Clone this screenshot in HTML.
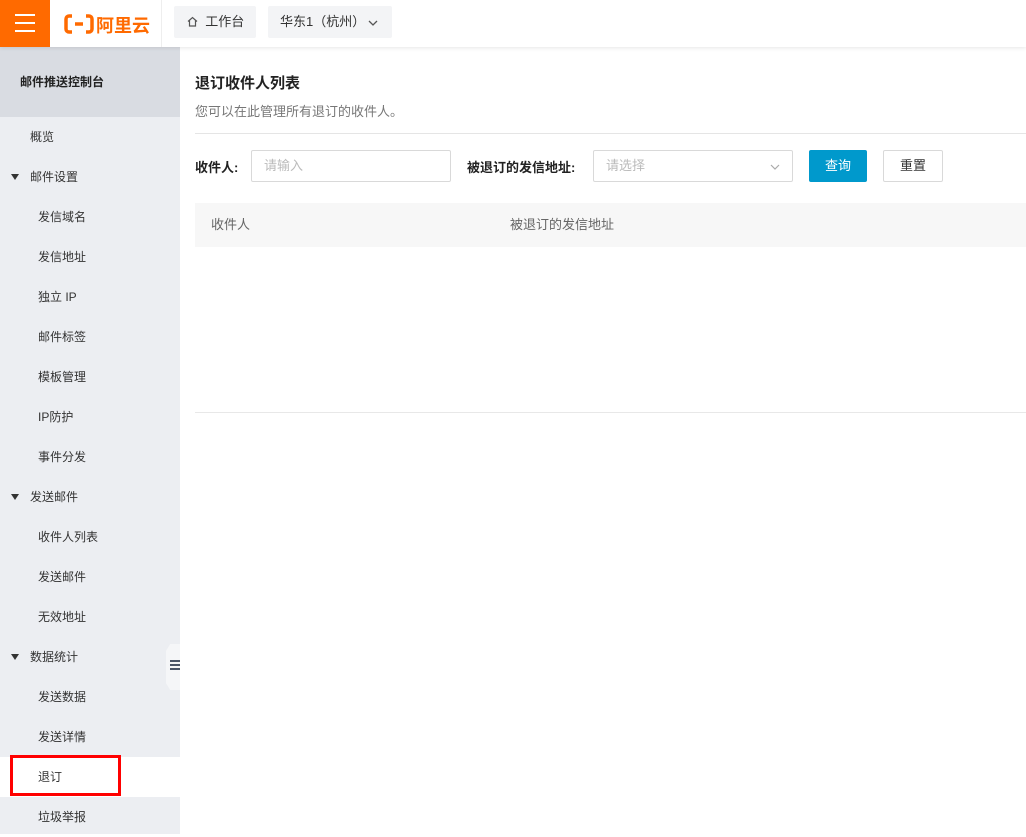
<!DOCTYPE html><html><head><meta charset="utf-8"><style>
*{margin:0;padding:0;box-sizing:border-box}
body{width:1026px;height:834px;overflow:hidden;background:#fff;font-family:"Liberation Sans","Noto Sans CJK SC",sans-serif;color:#333;position:relative}
.top{position:absolute;left:0;top:0;width:1026px;height:47px;background:#fff;box-shadow:0 1px 4px rgba(0,0,0,.1);z-index:2}
.burger{position:absolute;left:0;top:0;width:50px;height:47px;background:#ff6a00}
.burger i{position:absolute;left:15px;width:20px;height:2px;background:#fff}
.logo{position:absolute;left:64px;top:12px;color:#ff6a00;font-size:18px;font-weight:bold;height:24px}
.sep{position:absolute;left:161px;top:0;width:1px;height:47px;background:#eee}
.pill{position:absolute;top:6px;height:32px;background:#f3f4f6;border-radius:2px;font-size:13px;color:#333;line-height:32px}
.side{position:absolute;left:0;top:47px;width:180px;height:787px;background:#eceef2}
.side .hd{height:70px;background:#d9dce2;font-size:12px;font-weight:bold;padding-left:20px;line-height:70px;color:#222}
.it{position:absolute;left:0;width:180px;height:40px;line-height:40px;font-size:12px;color:#333}
.grp{padding-left:30px}.sub{padding-left:38px}
.tri{position:absolute;left:11px;top:17px;border-left:4px solid transparent;border-right:4px solid transparent;border-top:6px solid #333}
.main{position:absolute;left:195px}
</style></head><body>
<div class="top">
<div class="burger"><i style="top:14px"></i><i style="top:22px"></i><i style="top:30px"></i></div>
<div class="logo"><svg width="30" height="22" viewBox="0 0 30 22" style="position:absolute;left:0;top:1px"><path d="M8 3H5a3 3 0 0 0-3 3v10a3 3 0 0 0 3 3h3M22 3h3a3 3 0 0 1 3 3v10a3 3 0 0 1-3 3h-3M11 11h8" stroke="#ff6a00" stroke-width="3.5" fill="none"/></svg><span style="position:absolute;left:32px;top:0;white-space:nowrap;letter-spacing:0">阿里云</span></div>
<div class="sep"></div>
<div class="pill" style="left:174px;width:82px;padding-left:13px"><svg width="11" height="11" viewBox="0 0 11 11" style="vertical-align:-1px"><path d="M1 5.5 5.5 1.5 10 5.5M2.5 4.5V10h6V4.5" stroke="#555" stroke-width="1.2" fill="none"/></svg>&nbsp; 工作台</div>
<div class="pill" style="left:268px;width:124px;padding-left:12px">华东1（杭州）<svg width="10" height="6" viewBox="0 0 10 6" style="position:absolute;right:14px;top:14px"><path d="M1 1l4 4 4-4" stroke="#555" stroke-width="1.3" fill="none"/></svg></div>
</div>
<div class="side"><div class="hd">邮件推送控制台</div></div>
<div class="it" style="top:117px;padding-left:30px">概览</div>
<div class="it grp" style="top:157px"><span class="tri"></span>邮件设置</div>
<div class="it sub" style="top:197px">发信域名</div>
<div class="it sub" style="top:237px">发信地址</div>
<div class="it sub" style="top:277px">独立 IP</div>
<div class="it sub" style="top:317px">邮件标签</div>
<div class="it sub" style="top:357px">模板管理</div>
<div class="it sub" style="top:397px">IP防护</div>
<div class="it sub" style="top:437px">事件分发</div>
<div class="it grp" style="top:477px"><span class="tri"></span>发送邮件</div>
<div class="it sub" style="top:517px">收件人列表</div>
<div class="it sub" style="top:557px">发送邮件</div>
<div class="it sub" style="top:597px">无效地址</div>
<div class="it grp" style="top:637px"><span class="tri"></span>数据统计</div>
<div class="it sub" style="top:677px">发送数据</div>
<div class="it sub" style="top:717px">发送详情</div>
<div class="it sub" style="top:757px;background:#fff">退订</div>
<div style="position:absolute;left:10px;top:755px;width:111px;height:41px;border:3px solid #f00"></div>
<div class="it sub" style="top:797px">垃圾举报</div>
<div style="position:absolute;left:166px;top:644px;width:14px;height:46px;background:#f5f6f8;clip-path:polygon(30% 0,100% 0,100% 100%,30% 100%,0 85%,0 15%)"></div>
<div style="position:absolute;left:170px;top:660px;width:10px;height:2px;background:#4a5568;box-shadow:0 4px 0 #4a5568,0 8px 0 #4a5568"></div>

<div class="main" style="top:72px;font-size:15px;font-weight:bold;color:#222">退订收件人列表</div>
<div class="main" style="top:101px;font-size:13px;color:#777">您可以在此管理所有退订的收件人。</div>
<div style="position:absolute;left:195px;top:133px;width:831px;height:1px;background:#e5e5e5"></div>
<div class="main" style="top:157px;font-size:13px;font-weight:bold;color:#222">收件人:</div>
<div style="position:absolute;left:251px;top:150px;width:200px;height:32px;border:1px solid #d9d9d9;border-radius:2px;font-size:13px;color:#bbb;line-height:30px;padding-left:12px">请输入</div>
<div style="position:absolute;left:467px;top:157px;font-size:13px;font-weight:bold;color:#222">被退订的发信地址:</div>
<div style="position:absolute;left:593px;top:150px;width:200px;height:32px;border:1px solid #d9d9d9;border-radius:2px;font-size:13px;color:#bbb;line-height:30px;padding-left:12px">请选择<svg width="10" height="6" viewBox="0 0 10 6" style="position:absolute;right:12px;top:13px"><path d="M1 1l4 4 4-4" stroke="#aaa" stroke-width="1.2" fill="none"/></svg></div>
<div style="position:absolute;left:809px;top:150px;width:58px;height:32px;background:#0099cc;border-radius:2px;color:#fff;font-size:13px;line-height:32px;text-align:center">查询</div>
<div style="position:absolute;left:883px;top:150px;width:60px;height:32px;border:1px solid #d9d9d9;border-radius:2px;color:#333;font-size:13px;line-height:30px;text-align:center">重置</div>
<div style="position:absolute;left:195px;top:203px;width:831px;height:44px;background:#f7f7f7;font-size:13px;color:#666;line-height:44px"><span style="position:absolute;left:16px">收件人</span><span style="position:absolute;left:315px">被退订的发信地址</span></div>
<div style="position:absolute;left:195px;top:412px;width:831px;height:1px;background:#e8e8e8"></div>
</body></html>
